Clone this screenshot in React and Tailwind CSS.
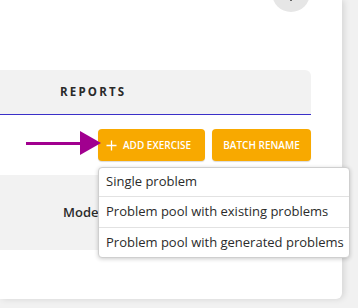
export default function App() {
  return (
    <div className="w-[358px] h-[308px] bg-[#f1f1f1] overflow-hidden relative" style={{ fontFamily: '"Open Sans", sans-serif' }}>
      <div className="relative w-[342px] h-[299px] bg-white rounded-br-[6px] shadow-[2px_0_6px_rgba(0,0,0,0.12)]">
        <div className="absolute left-[272px] top-[-26px] w-[38px] h-[38px] rounded-full bg-[#e6e6e6] flex items-end justify-center">
          <div className="w-[2px] h-[2px] bg-[#666] mb-[11px]"></div>
        </div>
        <div className="flex flex-col pt-[70px]">
          <div className="w-[311px] h-[45px] bg-[#f2f2f2] rounded-tr-[6px] border-b border-[#3b30c8] flex items-center pl-[60px]">
            <span className="text-[11.5px] font-bold tracking-[2.2px] text-[#2a2a2a]">REPORTS</span>
          </div>
          <div className="w-[311px] flex justify-end gap-[7px] mt-[14px] relative">
            <div className="absolute left-[26px] top-[2px] flex items-center">
              <div className="w-[54px] h-[3px] bg-[#a1008f]"></div>
              <div className="w-0 h-0 border-t-[12px] border-b-[12px] border-l-[21px] border-t-transparent border-b-transparent border-l-[#a1008f]"></div>
            </div>
            <button className="h-[32px] w-[107px] bg-[#f8a900] rounded-[4px] text-white text-[10px] font-semibold flex items-center pl-[8px] gap-[6px] whitespace-nowrap shadow-[0_1px_1px_rgba(0,0,0,0.15)]">
              <svg width="11" height="11" viewBox="0 0 11 11" className="shrink-0"><path d="M5.5 0.5v10M0.5 5.5h10" stroke="white" strokeWidth="1.3" fill="none" /></svg>
              <span>ADD EXERCISE</span>
            </button>
            <button className="h-[32px] w-[99px] bg-[#f8a900] rounded-[4px] text-white text-[10px] font-semibold flex items-center justify-center whitespace-nowrap shadow-[0_1px_1px_rgba(0,0,0,0.15)]">
              BATCH RENAME
            </button>
          </div>
          <div className="w-[311px] h-[75px] bg-[#f2f2f2] mt-[14px] flex items-center pl-[63px]">
            <span className="text-[13px] font-semibold text-[#2b2b2b]">Model</span>
          </div>
        </div>
        <div className="absolute left-[98px] top-[167px] w-[252px] bg-white border border-[#cfcfcf] rounded-[4px] shadow-[0_1px_4px_rgba(0,0,0,0.2)] flex flex-col">
          <div className="h-[29px] flex items-center pl-[7px] text-[13px] text-[#2b2b2b] whitespace-nowrap border-b border-[#e2e2e2]">Single problem</div>
          <div className="h-[31px] flex items-center pl-[7px] text-[13px] text-[#2b2b2b] whitespace-nowrap border-b border-[#e2e2e2]">Problem pool with existing problems</div>
          <div className="h-[29px] flex items-center pl-[7px] text-[13px] text-[#2b2b2b] whitespace-nowrap">Problem pool with generated problems</div>
        </div>
      </div>
    </div>
  );
}
